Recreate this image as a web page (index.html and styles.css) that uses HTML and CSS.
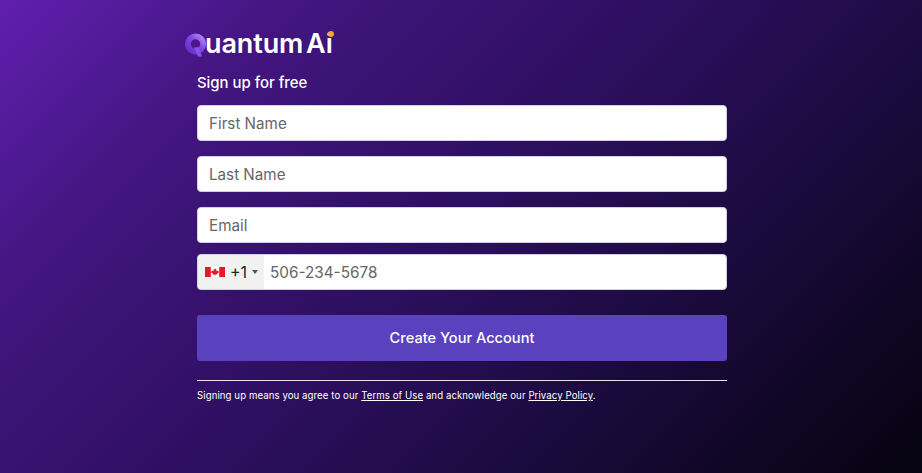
FILE: index.html
```html
<!DOCTYPE html>
<html lang="en">
<head>
<meta charset="utf-8">
<title>Quantum Ai</title>
<link rel="stylesheet" href="styles.css">
</head>
<body>
<main class="panel">
  <div class="logo">
    <svg class="logo-q" viewBox="0 0 24 26" width="24" height="26" aria-hidden="true">
      <defs>
        <linearGradient id="qg" x1="0" y1="1" x2="1" y2="0">
          <stop offset="0" stop-color="#5f25c4"/>
          <stop offset="0.55" stop-color="#8347e4"/>
          <stop offset="1" stop-color="#c9a6f7"/>
        </linearGradient>
      </defs>
      <path d="M11.500 2.500a10.500 10.500 0 1 0 0 21a10.500 10.500 0 0 0 0-21zm0 5.800a4.700 4.700 0 1 1 0 9.400a4.700 4.700 0 0 1 0-9.400z" fill="url(#qg)" fill-rule="evenodd"/>
      <path d="M10 16.500l4.500-.5 3.500 9.500h-4z" fill="#8b52ea"/>
    </svg>
    <span class="logo-text">uantum Ai</span>
    <span class="logo-dot"></span>
  </div>
  <h1 class="title">Sign up for free</h1>
  <form class="form">
    <input class="field" type="text" placeholder="First Name">
    <input class="field" type="text" placeholder="Last Name">
    <input class="field" type="email" placeholder="Email">
    <div class="phone">
      <div class="dial">
        <svg class="flag" viewBox="0 0 20 10" width="20" height="10" aria-hidden="true">
          <rect width="20" height="10" fill="#fff"/>
          <rect width="5.800" height="10" fill="#e8182c"/>
          <rect x="14.200" width="5.800" height="10" fill="#e8182c"/>
          <path d="M10 1.200l.8 1.400.8-.4-.3 2 1-.8.4.7 1.100-.2-.4 1.200.5.300-2 1.500.2.700-1.700-.2V8.500h-.8V7.400l-1.700.2.200-.7-2-1.500.5-.3-.4-1.200 1.100.2.400-.7 1 .8-.3-2 .8.4z" fill="#e8182c"/>
        </svg>
        <span class="code">+1</span>
        <span class="caret"></span>
      </div>
      <input class="phone-input" type="tel" placeholder="506-234-5678">
    </div>
    <button class="submit" type="button">Create Your Account</button>
  </form>
  <p class="legal">Signing up means you agree to our <a href="#">Terms of Use</a> and acknowledge our <a href="#">Privacy Policy</a>.</p>
</main>
</body>
</html>
```

FILE: styles.css
```css
* { box-sizing: border-box; }
html, body { height: 100%; }
body {
  margin: 0;
  font-family: Inter, "Liberation Sans", sans-serif;
  background: linear-gradient(135deg, #601fae 0%, #42157f 22%, #2d0f60 48%, #1d0b42 68%, #05030f 100%);
  color: #fff;
  overflow: hidden;
}
.panel {
  width: 530px;
  margin-left: 197px;
  padding-top: 30px;
}
.logo {
  position: relative;
  display: flex;
  align-items: center;
  height: 28px;
  margin-left: -13px;
}
.logo-q { flex: none; }
.logo-text {
  font-size: 27px;
  font-weight: 600;
  letter-spacing: -0.1px;
  word-spacing: -4px;
  line-height: 28px;
  margin-left: -3px;
}
.logo-dot {
  position: absolute;
  left: 144px;
  top: 1px;
  width: 6px;
  height: 6px;
  border-radius: 50%;
  background: #f2a23c;
}
.title {
  margin: 15px 0 0;
  font-size: 14.900px;
  font-weight: 500;
  line-height: 20px;
}
.form {
  display: flex;
  flex-direction: column;
  margin-top: 12px;
}
.field {
  height: 36px;
  margin-bottom: 15px;
  padding: 0 11px;
  border: 1px solid #cfd0e0;
  border-radius: 4px;
  background: #fff;
  font: 400 15.200px Inter, "Liberation Sans", sans-serif;
  color: #212529;
}
.field::placeholder, .phone-input::placeholder { color: #666; opacity: 1; }
.phone {
  display: flex;
  height: 36px;
  margin-top: -4px;
  border: 1px solid #cfd0e0;
  border-radius: 4px;
  background: #fff;
  overflow: hidden;
}
.dial {
  display: flex;
  align-items: center;
  width: 66px;
  padding-left: 7px;
  background: #f1f1f2;
  color: #212529;
  font-size: 16px;
}
.code { margin-left: 5px; }
.caret {
  margin-left: 5px;
  border-left: 3px solid transparent;
  border-right: 3px solid transparent;
  border-top: 4px solid #555;
}
.phone-input {
  flex: 1;
  min-width: 0;
  border: 0;
  padding: 0 6px;
  background: transparent;
  font: 400 15.300px Inter, "Liberation Sans", sans-serif;
}
.submit {
  height: 46px;
  margin-top: 25px;
  border: 0;
  border-radius: 3px;
  background: #5a41bd;
  color: #fff;
  font: 500 14.600px Inter, "Liberation Sans", sans-serif;
}
.legal {
  margin: 19px 0 0;
  padding-top: 8px;
  border-top: 1px solid #e6dff0;
  font-size: 9.650px;
  line-height: 13px;
  letter-spacing: 0.08px;
}
.legal a { color: #fff; }
```
